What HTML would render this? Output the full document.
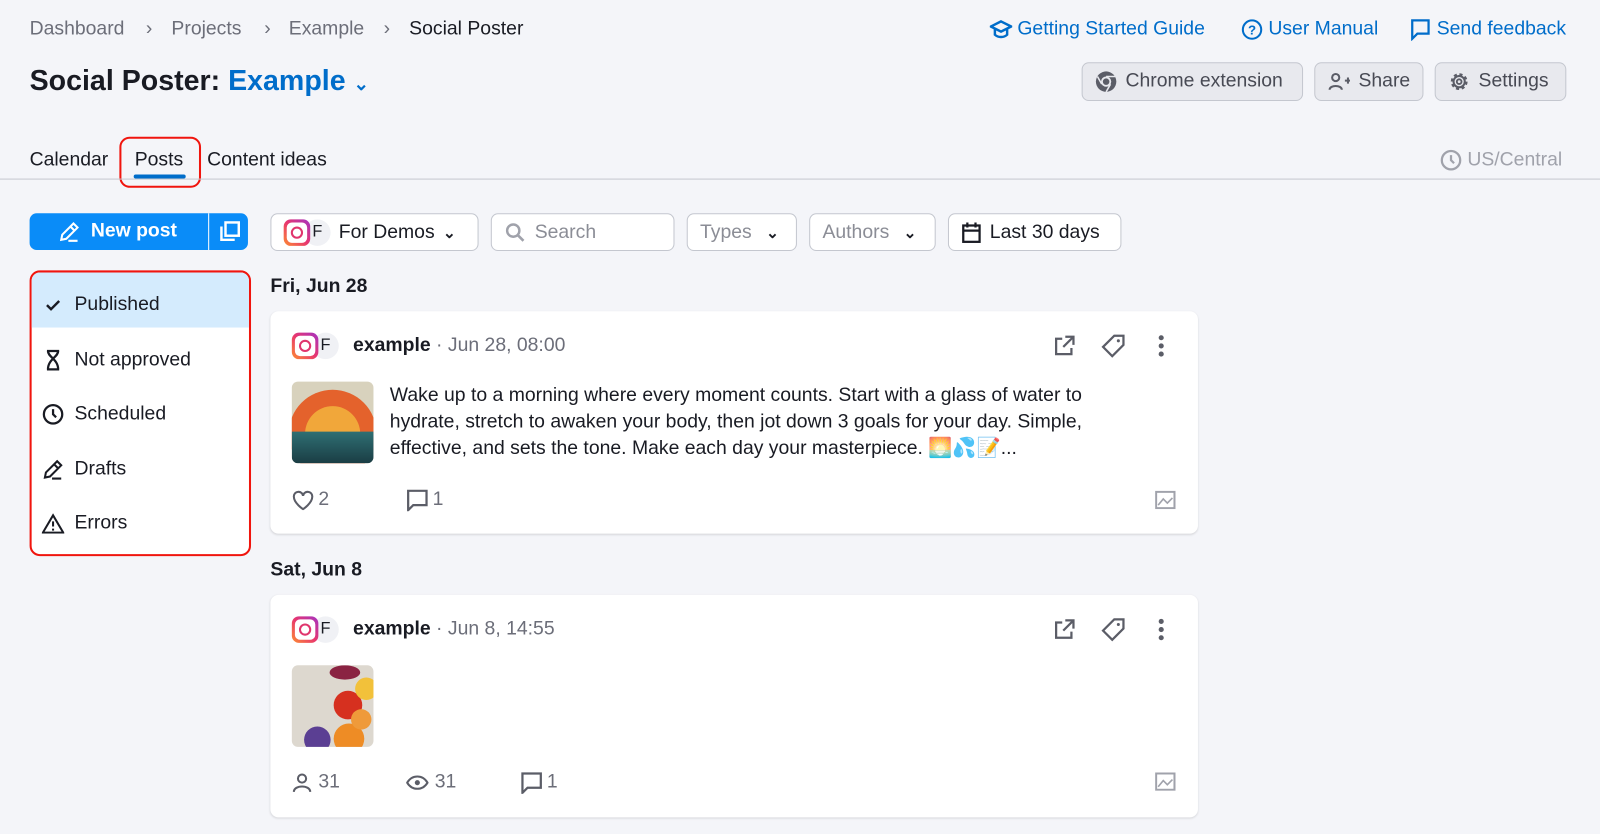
<!DOCTYPE html>
<html><head><meta charset="utf-8"><style>
*{box-sizing:border-box;margin:0;padding:0}
html,body{width:1600px;height:833px;overflow:hidden;background:#f4f5f9}
#w{position:absolute;left:0;top:0;width:1568px;height:817px;transform:scale(1.0204);transform-origin:0 0;font-family:"Liberation Sans",sans-serif;color:#191b23}
.a{position:absolute;white-space:nowrap}
.bc{top:18px;font-size:19px;color:#6c6e79}
.blue{color:#006dca}
.btn{position:absolute;top:61px;height:38px;border:1px solid #c4c7cf;background:#e8e9ee;border-radius:7px;font-size:19px;color:#484a54;display:flex;align-items:center;padding:0 12px;gap:8px}
.fil{position:absolute;top:209px;height:37px;border:1px solid #c4c7cf;background:#fff;border-radius:7px;font-size:19px;display:flex;align-items:center;padding:0 12px;gap:8px}
.side{position:absolute;left:29px;top:265px;width:217px;height:280px;border:2px solid #f0150e;border-radius:10px;background:#fff;overflow:hidden}
.side div{height:53.5px;display:flex;align-items:center;padding-left:10px;padding-top:11px;gap:10px;font-size:19px}
.side svg{width:22px;flex:none}
.card{position:absolute;left:265px;width:909px;background:#fff;border-radius:8px;box-shadow:0 1px 2px rgba(0,0,0,.12)}
.ig{width:26px;height:26px;border-radius:7px;background:linear-gradient(45deg,#fd8d32,#e8366f,#a233c4);display:inline-block;position:relative}
.ig:after{content:"";position:absolute;left:3px;top:3px;width:20px;height:20px;border-radius:5px;background:#fff}
.ig:before{content:"";position:absolute;left:7px;top:7px;width:12px;height:12px;border:2px solid #e0356d;border-radius:50%;z-index:2;box-sizing:border-box}
.fc{width:26px;height:26px;border-radius:50%;background:#f0f1f5;display:inline-flex;align-items:center;justify-content:center;font-size:16px;margin-left:-6px}
.gray{color:#6c6e79}
svg{display:block}
</style></head><body><div id="w">
<div class="a bc" style="left:29px">Dashboard</div>
<div class="a bc" style="left:143px">›</div>
<div class="a bc" style="left:168px">Projects</div>
<div class="a bc" style="left:259px">›</div>
<div class="a bc" style="left:283px">Example</div>
<div class="a bc" style="left:376px">›</div>
<div class="a bc" style="left:401px;color:#191b23">Social Poster</div>

<div class="a blue" style="left:970px;top:18px;font-size:19px;display:flex;gap:5px;align-items:center"><svg width="22" height="20" viewBox="0 0 22 20"><path d="M11 2 L21 7 L11 12 L1 7Z M5 9v6c3 3 9 3 12 0V9" fill="none" stroke="#006dca" stroke-width="2.4"/></svg>Getting Started Guide</div>
<div class="a blue" style="left:1216px;top:18px;font-size:19px;display:flex;gap:5px;align-items:center"><svg width="22" height="22"><circle cx="11" cy="11" r="9" fill="none" stroke="#006dca" stroke-width="2"/><text x="11" y="16" font-size="13" font-weight="bold" text-anchor="middle" fill="#006dca" font-family="Liberation Sans">?</text></svg>User Manual</div>
<div class="a blue" style="left:1382px;top:18px;font-size:19px;display:flex;gap:6px;align-items:center"><svg width="20" height="22"><path d="M2 2h16v13H7l-5 5z" fill="none" stroke="#006dca" stroke-width="2.2"/></svg>Send feedback</div>

<div class="a" style="left:29px;top:63px;font-size:28px;font-weight:bold">Social Poster: <span class="blue">Example</span> <span class="blue" style="font-size:18px">⌄</span></div>

<div class="btn" style="left:1060px;width:217px"><svg width="22" height="22"><circle cx="11" cy="11" r="10" fill="#5b5d67"/><circle cx="11" cy="11" r="5" fill="#e8e9ee"/><circle cx="11" cy="11" r="3.2" fill="#5b5d67"/><path d="M11 6h9M6.7 13.5L2.5 6M15.3 13.5L11 21" stroke="#e8e9ee" stroke-width="1.5"/></svg>Chrome extension</div>
<div class="btn" style="left:1288px;width:107px"><svg width="24" height="20"><circle cx="8" cy="6" r="3.5" fill="none" stroke="#5b5d67" stroke-width="2"/><path d="M2 18c0-5 12-5 12 0" fill="none" stroke="#5b5d67" stroke-width="2"/><path d="M17 9h6M20 6v6" stroke="#5b5d67" stroke-width="2"/></svg>Share</div>
<div class="btn" style="left:1406px;width:129px"><svg width="22" height="22"><circle cx="11" cy="11" r="7" fill="none" stroke="#5b5d67" stroke-width="2.5" stroke-dasharray="3 2.5"/><circle cx="11" cy="11" r="5.5" fill="none" stroke="#5b5d67" stroke-width="2"/><circle cx="11" cy="11" r="2.3" fill="none" stroke="#5b5d67" stroke-width="1.8"/></svg>Settings</div>

<div class="a" style="left:29px;top:146px;font-size:19px">Calendar</div>
<div class="a" style="left:132px;top:146px;font-size:19px">Posts</div>
<div class="a" style="left:131px;top:171px;width:51px;height:4px;background:#006dca;border-radius:2px"></div>
<div class="a" style="left:117px;top:134px;width:80px;height:50px;border:2px solid #f0150e;border-radius:10px"></div>
<div class="a" style="left:203px;top:146px;font-size:19px">Content ideas</div>
<div class="a" style="left:1411px;top:146px;font-size:19px;color:#a0a2ab;display:flex;gap:5px;align-items:center"><svg width="22" height="22"><circle cx="11" cy="11" r="9" fill="none" stroke="#a0a2ab" stroke-width="2.2"/><path d="M11 6v5l3 3" fill="none" stroke="#a0a2ab" stroke-width="2.2"/></svg>US/Central</div>
<div class="a" style="left:0;top:175px;width:1568px;height:1px;background:#c4c7cf"></div>

<div class="a" style="left:29px;top:209px;width:214px;height:36px;background:#0a8cf8;border-radius:7px;color:#fff;font-weight:bold;font-size:19px">
 <div class="a" style="left:28px;top:7px;display:flex;gap:10px;align-items:center"><svg width="22" height="22"><path d="M3 19l1-5L15 3l4 4L8 18z M12 6l4 4 M10 20h9" fill="none" stroke="#fff" stroke-width="2"/></svg>New post</div>
 <div class="a" style="left:175px;top:0;width:1px;height:36px;background:#fff"></div>
 <svg class="a" style="left:185px;top:7px" width="22" height="22"><rect x="7" y="2" width="13" height="13" fill="none" stroke="#fff" stroke-width="2.4"/><path d="M3 6v13h13" fill="none" stroke="#fff" stroke-width="2.4"/></svg>
</div>

<div class="fil" style="left:265px;width:204px"><span style="display:flex;align-items:center"><span class="ig"></span><span class="fc">F</span></span>For Demos <span style="font-weight:bold;font-size:15px">⌄</span></div>
<div class="fil" style="left:481px;width:180px;color:#8b8d96"><svg width="22" height="22"><circle cx="9" cy="9" r="6" fill="none" stroke="#a0a2ab" stroke-width="2.4"/><path d="M13 13l6 6" stroke="#a0a2ab" stroke-width="2.6"/></svg>Search</div>
<div class="fil" style="left:673px;width:108px;color:#8b8d96">Types <span style="color:#191b23;font-weight:bold;font-size:15px;margin-left:6px">⌄</span></div>
<div class="fil" style="left:793px;width:124px;color:#8b8d96">Authors <span style="color:#191b23;font-weight:bold;font-size:15px;margin-left:6px">⌄</span></div>
<div class="fil" style="left:929px;width:170px"><svg width="20" height="22"><rect x="2" y="4" width="16" height="16" fill="none" stroke="#191b23" stroke-width="2.2"/><path d="M2 9h16M6 1v5M14 1v5" stroke="#191b23" stroke-width="2.2"/></svg>Last 30 days</div>

<div class="side">
 <div style="background:#d4ebfd"><svg width="22" height="18"><path d="M5 9l4 4 8-8" fill="none" stroke="#191b23" stroke-width="2.4"/></svg>Published</div>
 <div><svg width="22" height="22"><path d="M5 2h12M5 20h12M6 2c0 6 10 8 10 18M16 2c0 6-10 8-10 18" fill="none" stroke="#191b23" stroke-width="2.2"/></svg>Not approved</div>
 <div><svg width="22" height="22"><circle cx="11" cy="11" r="9" fill="none" stroke="#191b23" stroke-width="2.2"/><path d="M11 6v5l3 3" fill="none" stroke="#191b23" stroke-width="2.2"/></svg>Scheduled</div>
 <div><svg width="22" height="22"><path d="M3 19l1-5L15 3l4 4L8 18z M12 6l4 4 M10 20h9" fill="none" stroke="#191b23" stroke-width="2"/></svg>Drafts</div>
 <div><svg width="22" height="20"><path d="M11 2L21 19H1z" fill="none" stroke="#191b23" stroke-width="2"/><path d="M11 8v5M11 15v2" stroke="#191b23" stroke-width="2"/></svg>Errors</div>
</div>

<div class="a" style="left:265px;top:270px;font-size:19px;font-weight:bold">Fri, Jun 28</div>
<div class="card" style="top:305px;height:218px">
 <div class="a" style="left:21px;top:21px;display:flex;align-items:center;font-size:19px"><span class="ig"></span><span class="fc">F</span><b style="margin-left:14px">example</b><span class="gray">&nbsp;· Jun 28, 08:00</span></div>
 <svg class="a" style="left:767px;top:23px" width="22" height="22"><path d="M9 4H3v15h15v-6M12 2h8v8M20 2L10 12" fill="none" stroke="#5b5d67" stroke-width="2.2"/></svg>
 <svg class="a" style="left:814px;top:22px" width="24" height="24"><path d="M13 2h9v9L11 22 2 13z" fill="none" stroke="#5b5d67" stroke-width="2.2"/><circle cx="17" cy="7" r="1.5" fill="#5b5d67"/></svg>
 <svg class="a" style="left:870px;top:23px" width="6" height="22"><circle cx="3" cy="3" r="2.5" fill="#5b5d67"/><circle cx="3" cy="11" r="2.5" fill="#5b5d67"/><circle cx="3" cy="19" r="2.5" fill="#5b5d67"/></svg>
 <div class="a" style="left:21px;top:69px;width:80px;height:80px;border-radius:6px;overflow:hidden;background:#d8d2bd">
  <div style="position:absolute;left:-3px;top:8px;width:86px;height:86px;border-radius:50%;background:#e4622c"></div>
  <div style="position:absolute;left:13px;top:24px;width:54px;height:54px;border-radius:50%;background:#f1a73a"></div>
  <div style="position:absolute;left:0;top:49px;width:80px;height:31px;background:linear-gradient(#2f6f73,#1a3d44)"></div>
 </div>
 <div class="a" style="left:117px;top:70px;font-size:19px;line-height:26px;white-space:normal;width:715px">Wake up to a morning where every moment counts. Start with a glass of water to hydrate, stretch to awaken your body, then jot down 3 goals for your day. Simple, effective, and sets the tone. Make each day your masterpiece. 🌅💦📝...</div>
 <div class="a gray" style="left:21px;top:174px;font-size:19px;display:flex;align-items:center;gap:4px"><svg width="22" height="20"><path d="M11 19S2 13 2 7a4.5 4.5 0 0 1 9-1 4.5 4.5 0 0 1 9 1c0 6-9 12-9 12z" fill="none" stroke="#5b5d67" stroke-width="2"/></svg>2</div>
 <div class="a gray" style="left:133px;top:174px;font-size:19px;display:flex;align-items:center;gap:4px"><svg width="22" height="22"><path d="M2 2h18v14H7l-5 5z" fill="none" stroke="#5b5d67" stroke-width="2.2"/></svg>1</div>
 <svg class="a" style="left:867px;top:176px" width="20" height="18"><rect x="1" y="1" width="18" height="16" fill="none" stroke="#a0a2ab" stroke-width="2"/><path d="M3 14l5-6 4 4 5-5" fill="none" stroke="#a0a2ab" stroke-width="1.6"/></svg>
</div>

<div class="a" style="left:265px;top:548px;font-size:19px;font-weight:bold">Sat, Jun 8</div>
<div class="card" style="top:583px;height:218px">
 <div class="a" style="left:21px;top:21px;display:flex;align-items:center;font-size:19px"><span class="ig"></span><span class="fc">F</span><b style="margin-left:14px">example</b><span class="gray">&nbsp;· Jun 8, 14:55</span></div>
 <svg class="a" style="left:767px;top:23px" width="22" height="22"><path d="M9 4H3v15h15v-6M12 2h8v8M20 2L10 12" fill="none" stroke="#5b5d67" stroke-width="2.2"/></svg>
 <svg class="a" style="left:814px;top:22px" width="24" height="24"><path d="M13 2h9v9L11 22 2 13z" fill="none" stroke="#5b5d67" stroke-width="2.2"/><circle cx="17" cy="7" r="1.5" fill="#5b5d67"/></svg>
 <svg class="a" style="left:870px;top:23px" width="6" height="22"><circle cx="3" cy="3" r="2.5" fill="#5b5d67"/><circle cx="3" cy="11" r="2.5" fill="#5b5d67"/><circle cx="3" cy="19" r="2.5" fill="#5b5d67"/></svg>
 <div class="a" style="left:21px;top:69px;width:80px;height:80px;border-radius:6px;overflow:hidden;background:#ddd8cf">
  <div style="position:absolute;left:41px;top:25px;width:28px;height:28px;border-radius:50%;background:#d6301f"></div>
  <div style="position:absolute;left:62px;top:12px;width:22px;height:22px;border-radius:50%;background:#f2c13a"></div>
  <div style="position:absolute;left:41px;top:57px;width:30px;height:30px;border-radius:50%;background:#ee8c25"></div>
  <div style="position:absolute;left:12px;top:60px;width:26px;height:26px;border-radius:50%;background:#5b3f93"></div>
  <div style="position:absolute;left:58px;top:43px;width:20px;height:20px;border-radius:50%;background:#ef9a3a"></div>
  <div style="position:absolute;left:37px;top:0;width:30px;height:14px;border-radius:50%;background:#8a2342"></div>
 </div>
 <div class="a gray" style="left:21px;top:173px;font-size:19px;display:flex;align-items:center;gap:6px"><svg width="20" height="20"><circle cx="10" cy="6" r="4" fill="none" stroke="#5b5d67" stroke-width="2"/><path d="M2 19c0-7 16-7 16 0" fill="none" stroke="#5b5d67" stroke-width="2"/></svg>31</div>
 <div class="a gray" style="left:133px;top:173px;font-size:19px;display:flex;align-items:center;gap:6px"><svg width="22" height="16"><path d="M1 8c5-8 15-8 20 0-5 8-15 8-20 0z" fill="none" stroke="#5b5d67" stroke-width="2"/><circle cx="11" cy="8" r="2.5" fill="#5b5d67"/></svg>31</div>
 <div class="a gray" style="left:245px;top:173px;font-size:19px;display:flex;align-items:center;gap:4px"><svg width="22" height="22"><path d="M2 2h18v14H7l-5 5z" fill="none" stroke="#5b5d67" stroke-width="2.2"/></svg>1</div>
 <svg class="a" style="left:867px;top:174px" width="20" height="18"><rect x="1" y="1" width="18" height="16" fill="none" stroke="#a0a2ab" stroke-width="2"/><path d="M3 14l5-6 4 4 5-5" fill="none" stroke="#a0a2ab" stroke-width="1.6"/></svg>
</div>
</div></body></html>
